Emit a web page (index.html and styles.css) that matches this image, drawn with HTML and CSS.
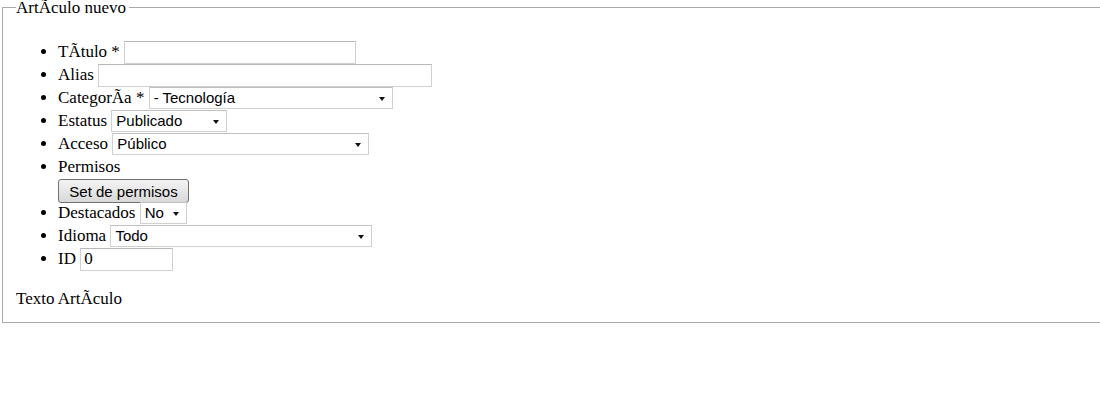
FILE: index.html
```
<!DOCTYPE html>
<html lang="es">
<head>
    <meta charset="UTF-8" />
    <title>ArtÃculo nuevo</title>
    <link rel="stylesheet" href="styles.css">
</head>
<body>
    <fieldset class="box">
        <legend>ArtÃculo nuevo</legend>
        <ul class="fields">
            <li>TÃtulo * <input type="text" class="txt w-titulo" /></li>
            <li>Alias <input type="text" class="txt w-alias" /></li>
            <li>CategorÃa * <span class="sel w-cat">- Tecnología</span></li>
            <li>Estatus <span class="sel w-estatus">Publicado</span></li>
            <li>Acceso <span class="sel w-acceso">Público</span></li>
            <li class="two">Permisos<br><button class="btn">Set de permisos</button></li>
            <li>Destacados <span class="sel w-dest">No</span></li>
            <li>Idioma <span class="sel w-idioma">Todo</span></li>
            <li>ID <input type="text" class="txt w-id" value="0" /></li>
        </ul>
        <p class="texto">Texto ArtÃculo</p>
    </fieldset>
</body>
</html>
```

FILE: styles.css
```
html {
    overflow: hidden;
}

body {
    margin: 0;
    font-family: "Liberation Serif", "Times New Roman", serif;
    font-size: 17px;
    color: #000;
    background: #fff;
}

.box {
    margin: -1px 0 0 2px;
    width: 1140px;
    padding: 0 13px 14px 13px;
    border: 1px solid #a9a9a9;
}

.box legend {
    padding: 2px 3px 0 0;
    line-height: 14px;
}

.fields {
    margin: 25px 0 0 0;
    padding-left: 42px;
}

.fields li {
    height: 23px;
    line-height: 23px;
}

.fields li.two {
    height: 46px;
}

.txt {
    box-sizing: border-box;
    height: 23px;
    margin: 0;
    padding: 1px 3px;
    border: 1px solid #d0d0d0;
    border-top-color: #b8b8b8;
    font-family: "Liberation Serif", serif;
    font-size: 17px;
    vertical-align: baseline;
}

.sel {
    display: inline-block;
    position: relative;
    box-sizing: border-box;
    height: 22px;
    padding: 0 0 0 4px;
    border: 1px solid #d0d0d0;
    border-top-color: #c0c0c0;
    font-family: "Liberation Sans", Arial, sans-serif;
    font-size: 15px;
    line-height: 20px;
    vertical-align: baseline;
}

.sel::after {
    content: "";
    position: absolute;
    right: 7px;
    top: 9px;
    border-left: 3px solid transparent;
    border-right: 3px solid transparent;
    border-top: 4px solid #111;
}

.btn {
    box-sizing: border-box;
    width: 131px;
    height: 24px;
    margin: 0;
    padding: 0;
    border: 1px solid #707070;
    border-radius: 3px;
    background: linear-gradient(#f4f4f4, #e6e6e6 50%, #d8d8d8);
    font-family: "Liberation Sans", Arial, sans-serif;
    font-size: 15px;
    color: #000;
    vertical-align: middle;
}

.w-titulo { width: 232px; }
.w-alias { width: 334px; }
.w-cat { width: 244px; }
.w-estatus { width: 116px; }
.w-acceso { width: 257px; }
.w-dest { width: 47px; }
.w-idioma { width: 262px; }
.w-id { width: 93px; }

.texto {
    margin: 19px 0 0 0;
    line-height: 19px;
}
```
